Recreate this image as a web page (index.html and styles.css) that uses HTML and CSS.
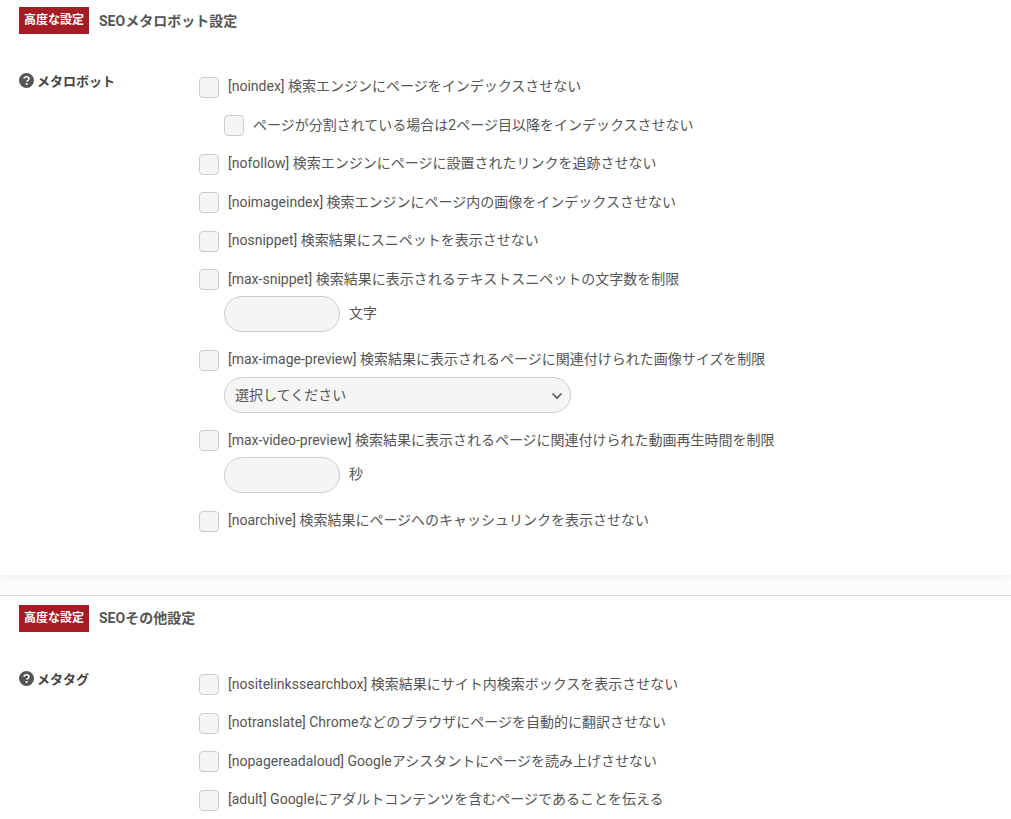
FILE: index.html
```html
<!DOCTYPE html>
<html lang="ja">
<head>
    <meta charset="UTF-8">
    <title>SEO設定</title>
    <link rel="stylesheet" href="styles.css">
</head>
<body>
    <section class="panel panel-first">
        <div class="panel-head">
            <span class="badge">高度な設定</span>
            <h2>SEOメタロボット設定</h2>
        </div>
        <div class="field">
            <div class="field-label">
                <svg class="help" viewBox="0 0 16 16"><circle cx="8" cy="8" r="8" fill="#555"/><path d="M5.400 6.200C5.500 4.700 6.600 4 8 4c1.500 0 2.600.8 2.600 2.100 0 1.100-.7 1.600-1.400 2-.6.4-.8.6-.8 1.300" fill="none" stroke="#fff" stroke-width="1.700"/><rect x="7.200" y="10.700" width="1.900" height="1.900" fill="#fff"/></svg>
                メタロボット
            </div>
            <div class="options">
                <label class="opt"><span class="check"></span>[noindex] 検索エンジンにページをインデックスさせない</label>
                <label class="opt sub"><span class="check"></span>ページが分割されている場合は2ページ目以降をインデックスさせない</label>
                <label class="opt"><span class="check"></span>[nofollow] 検索エンジンにページに設置されたリンクを追跡させない</label>
                <label class="opt"><span class="check"></span>[noimageindex] 検索エンジンにページ内の画像をインデックスさせない</label>
                <label class="opt"><span class="check"></span>[nosnippet] 検索結果にスニペットを表示させない</label>
                <label class="opt"><span class="check"></span>[max-snippet] 検索結果に表示されるテキストスニペットの文字数を制限</label>
                <div class="extra"><input class="num" type="text"><span class="unit">文字</span></div>
                <label class="opt"><span class="check"></span>[max-image-preview] 検索結果に表示されるページに関連付けられた画像サイズを制限</label>
                <div class="extra">
                    <div class="select">選択してください
                        <svg class="chev" viewBox="0 0 12 8"><path d="M1.500 1.500 6 6l4.500-4.500" fill="none" stroke="#555" stroke-width="1.600"/></svg>
                    </div>
                </div>
                <label class="opt"><span class="check"></span>[max-video-preview] 検索結果に表示されるページに関連付けられた動画再生時間を制限</label>
                <div class="extra"><input class="num" type="text"><span class="unit">秒</span></div>
                <label class="opt"><span class="check"></span>[noarchive] 検索結果にページへのキャッシュリンクを表示させない</label>
            </div>
        </div>
    </section>
    <div class="gap"></div>
    <section class="panel panel-second">
        <div class="panel-head">
            <span class="badge">高度な設定</span>
            <h2>SEOその他設定</h2>
        </div>
        <div class="field">
            <div class="field-label">
                <svg class="help" viewBox="0 0 16 16"><circle cx="8" cy="8" r="8" fill="#555"/><path d="M5.400 6.200C5.500 4.700 6.600 4 8 4c1.500 0 2.600.8 2.600 2.100 0 1.100-.7 1.600-1.400 2-.6.4-.8.6-.8 1.300" fill="none" stroke="#fff" stroke-width="1.700"/><rect x="7.200" y="10.700" width="1.900" height="1.900" fill="#fff"/></svg>
                メタタグ
            </div>
            <div class="options">
                <label class="opt"><span class="check"></span>[nositelinkssearchbox] 検索結果にサイト内検索ボックスを表示させない</label>
                <label class="opt"><span class="check"></span>[notranslate] Chromeなどのブラウザにページを自動的に翻訳させない</label>
                <label class="opt"><span class="check"></span>[nopagereadaloud] Googleアシスタントにページを読み上げさせない</label>
                <label class="opt"><span class="check"></span>[adult] Googleにアダルトコンテンツを含むページであることを伝える</label>
            </div>
        </div>
    </section>
</body>
</html>
```

FILE: styles.css
```css
html, body {
    margin: 0;
    padding: 0;
    height: 819px;
    overflow: hidden;
    background-color: #fff;
}

body {
    font-family: Roboto, "Noto Sans CJK JP", sans-serif;
    font-size: 14px;
    color: #555;
}

.panel {
    padding-left: 19px;
    background-color: #fff;
}

.panel-first {
    height: 568px;
    padding-top: 7px;
    box-shadow: 0 2px 6px rgba(0, 0, 0, 0.06);
    position: relative;
}

.gap {
    height: 20px;
    background-color: #fcfcfc;
}

.panel-second {
    padding-top: 9px;
    border-top: 1px solid #dcdcdc;
}

.panel-second h2 {
    margin-top: -4px;
}

.panel-second .options {
    padding-top: 6px;
}

.panel-head {
    display: flex;
    align-items: center;
    height: 27px;
    margin-bottom: 34px;
}

.badge {
    width: 70px;
    height: 27px;
    line-height: 27px;
    text-align: center;
    background-color: #a51c24;
    color: #fff;
    font-size: 12px;
    font-weight: 700;
}

h2 {
    margin: -2px 0 0 10px;
    font-size: 14px;
    font-weight: 700;
    color: #555;
}

.field {
    display: flex;
}

.field-label {
    width: 180px;
    flex-shrink: 0;
    display: flex;
    align-items: center;
    align-self: flex-start;
    gap: 3px;
    height: 20px;
    margin-top: 2px;
    font-weight: 700;
    color: #444;
    font-size: 13px;
}

.help {
    width: 15px;
    height: 15px;
}

.options {
    display: flex;
    flex-direction: column;
    padding-top: 6.500px;
}

.opt {
    display: flex;
    align-items: center;
    height: 21px;
    margin-bottom: 17.500px;
    white-space: nowrap;
}

.opt.sub {
    margin-left: 25px;
}

.check {
    width: 18px;
    height: 19px;
    margin: 4px 9px 0 0;
    border: 1px solid #ccc;
    border-radius: 4px;
    background-color: #f5f5f5;
    flex-shrink: 0;
}

.extra {
    display: flex;
    align-items: center;
    margin: -9.500px 0 15.500px 25px;
}

.unit {
    margin-top: -4px;
}

.num {
    width: 116px;
    height: 36px;
    padding: 0;
    border: 1px solid #ccc;
    border-radius: 18px;
    background-color: #f5f5f5;
    box-sizing: border-box;
    margin-right: 9px;
}

.select {
    position: relative;
    width: 347px;
    height: 36px;
    line-height: 34px;
    padding-left: 10px;
    box-sizing: border-box;
    border: 1px solid #ccc;
    border-radius: 18px;
    background-color: #f5f5f5;
    color: #555;
}

.chev {
    position: absolute;
    right: 7px;
    top: 14px;
    width: 12px;
    height: 8px;
}
```
